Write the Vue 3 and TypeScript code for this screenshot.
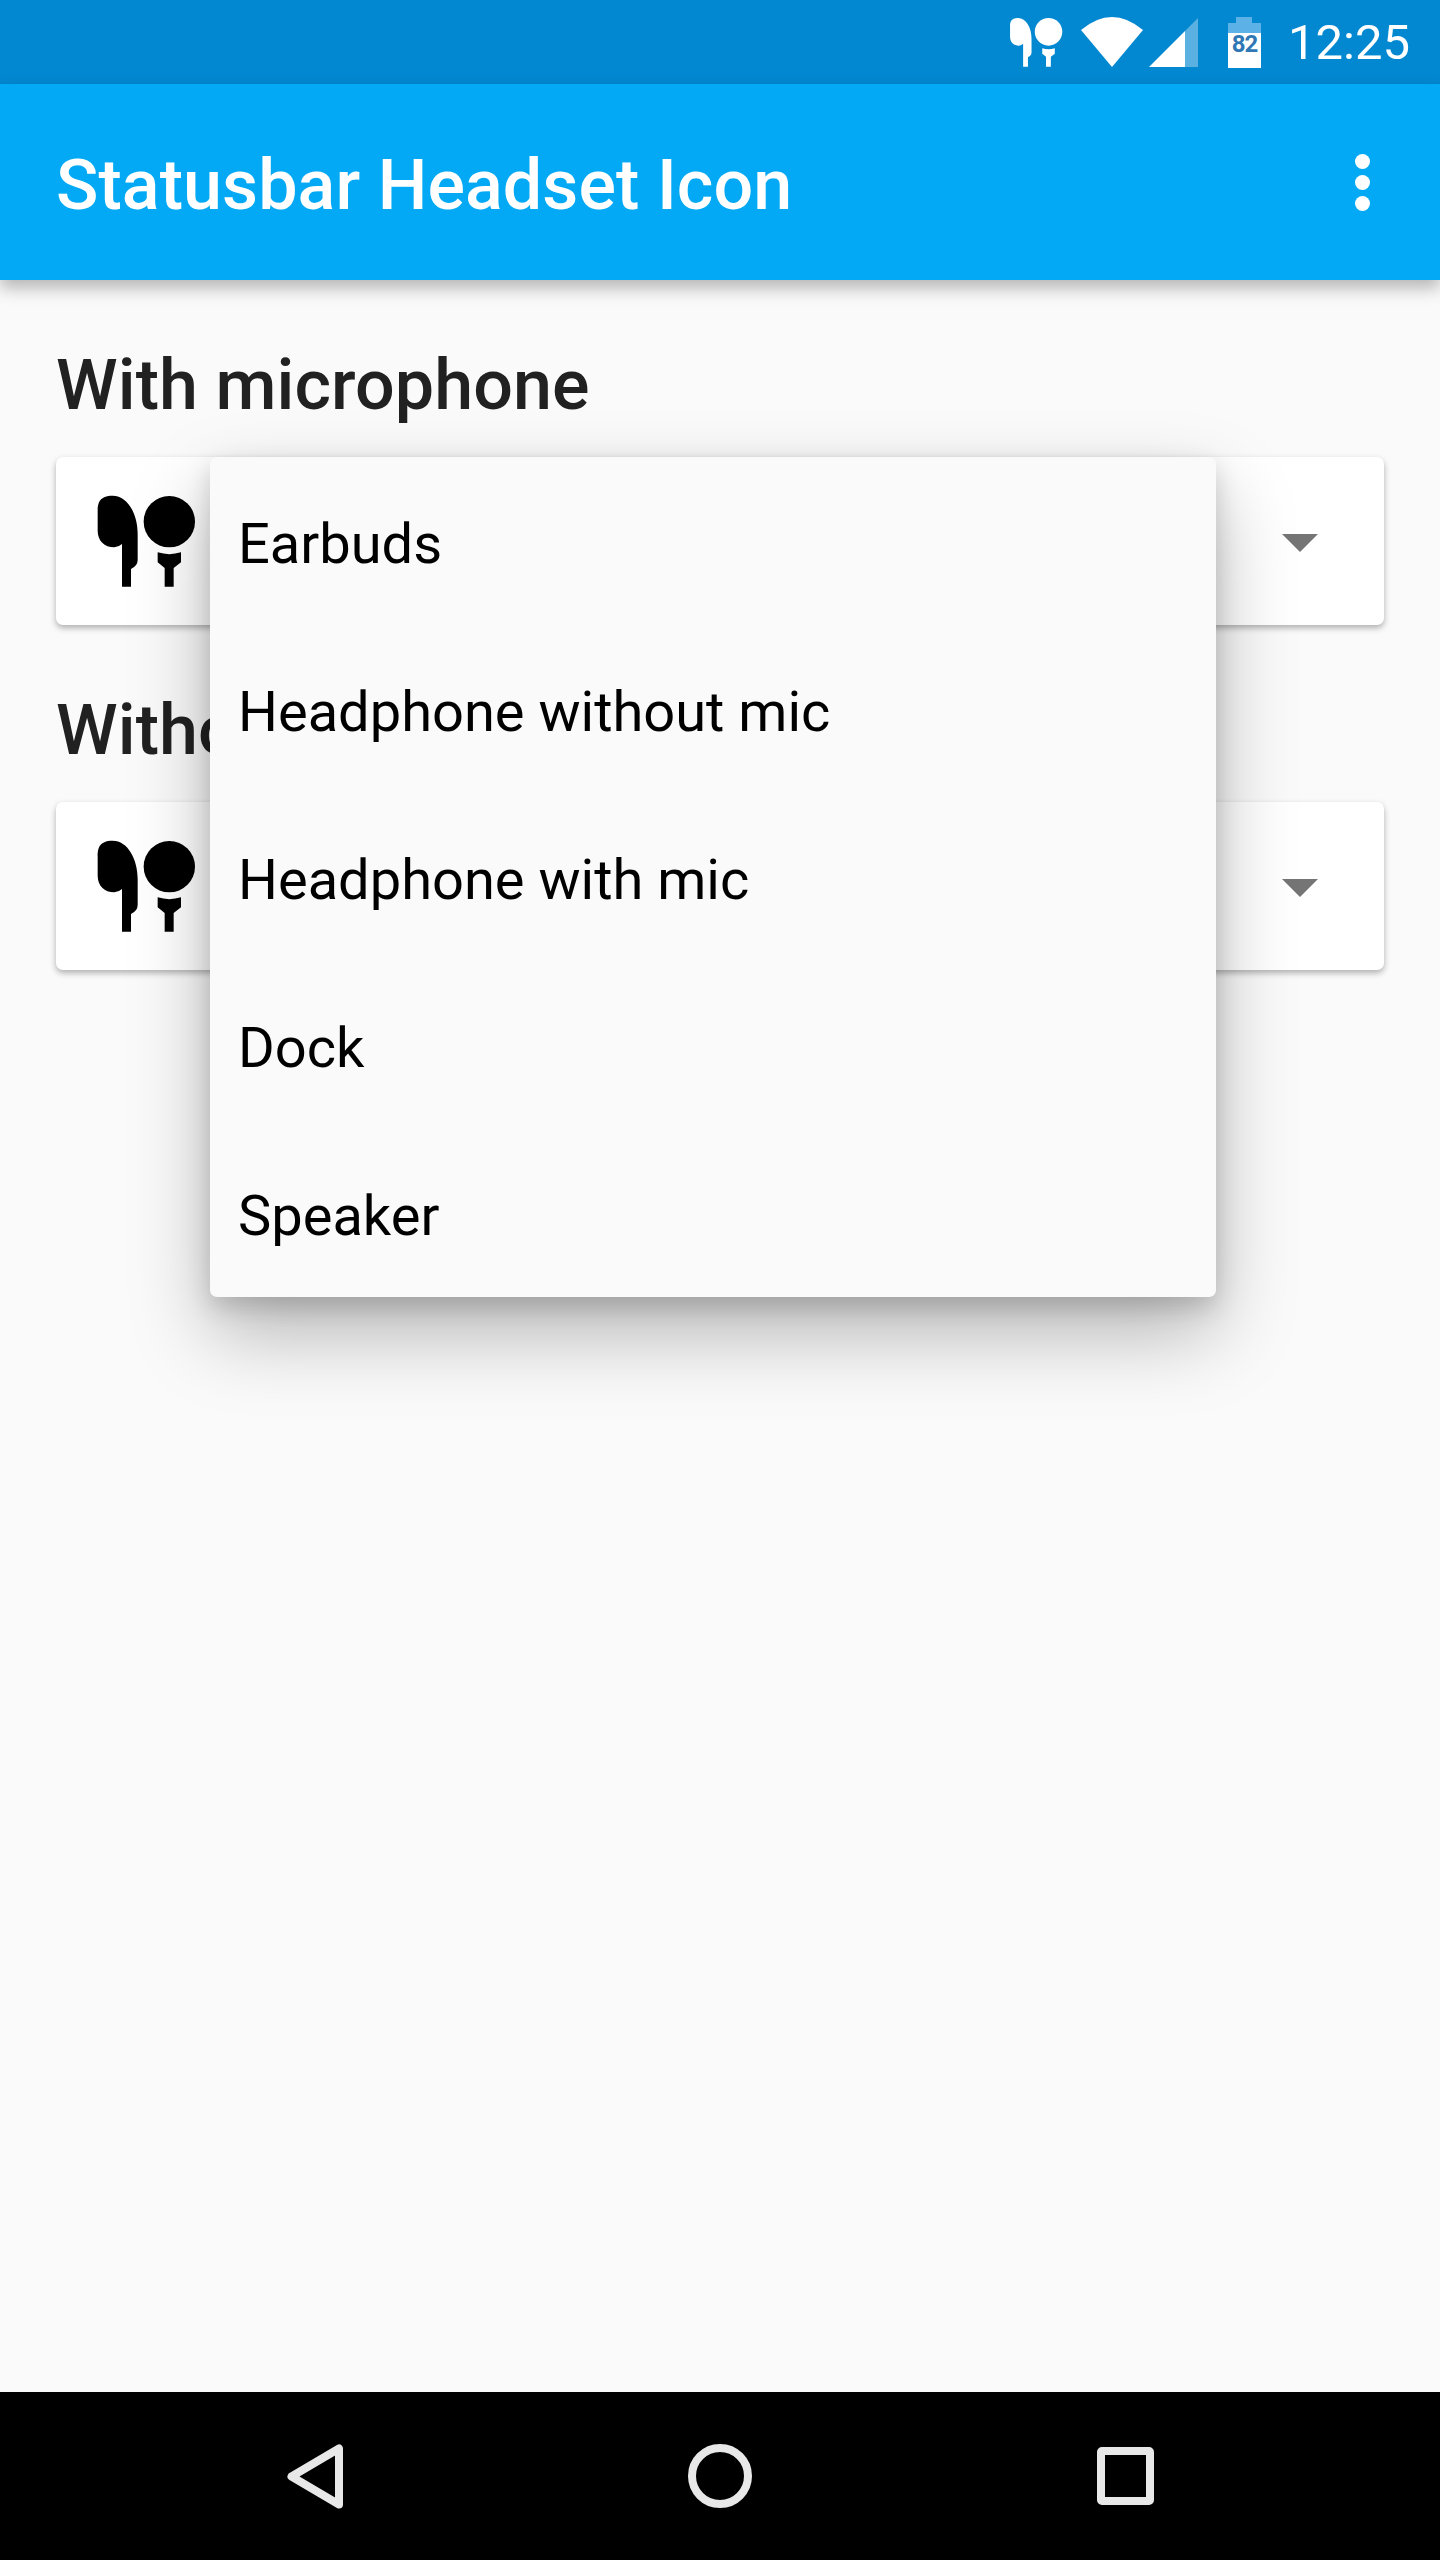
<script setup lang="ts">
const menuItems: string[] = ['Earbuds', 'Headphone without mic', 'Headphone with mic', 'Dock', 'Speaker'];
const sections: string[] = ['With microphone', 'Without microphone'];
</script>

<template>
  <div class="screen">
    <svg width="0" height="0" class="defs">
      <symbol id="earbuds" viewBox="170 160 300 285">
        <path d="M220 165C178 165 175 190 175 212V270C175 300 195 320 225 320Q240 318 248 310V438H275V385Q295 375 295 358V280C295 220 265 165 220 165Z" />
        <circle cx="390" cy="243" r="77" />
        <path d="M355 335Q390 346 425 335V365L403 382V438H376V382L355 365Z" />
      </symbol>
    </svg>

    <div class="status-bar">
      <svg class="status-buds"><use href="#earbuds" /></svg>
      <svg class="status-wifi" viewBox="0 0 62 50">
        <path d="M0 13Q31 -13 62 13L31 50Z" fill="#fff" />
      </svg>
      <svg class="status-signal" viewBox="0 0 49 49">
        <path d="M0 49L36 13V49Z" fill="#fff" />
        <path d="M36 13L49 0V49H36Z" fill="#fff" fill-opacity="0.35" />
      </svg>
      <div class="battery">
        <div class="battery-cap"></div>
        <div class="battery-body">82</div>
      </div>
      <span class="clock">12:25</span>
    </div>

    <header class="app-bar">
      <h1 class="title">Statusbar Headset Icon</h1>
      <div class="overflow">
        <span class="dot"></span>
        <span class="dot"></span>
        <span class="dot"></span>
      </div>
    </header>

    <main class="content">
      <section v-for="section in sections" :key="section" class="section">
        <h2 class="heading">{{ section }}</h2>
        <div class="spinner">
          <svg class="spinner-icon"><use href="#earbuds" /></svg>
          <span class="caret"></span>
        </div>
      </section>

      <ul class="menu">
        <li v-for="item in menuItems" :key="item" class="menu-item">{{ item }}</li>
      </ul>
    </main>

    <nav class="nav-bar">
      <svg class="nav-back" viewBox="0 0 56 65">
        <path d="M52 4.5V60.5L4.5 32.5Z" fill="none" stroke="#e8e8e8" stroke-width="8" stroke-linejoin="round" />
      </svg>
      <span class="nav-home"></span>
      <span class="nav-recent"></span>
    </nav>
  </div>
</template>

<style>
html,
body {
  margin: 0;
  background: #fafafa;
}
</style>

<style scoped>
.screen {
  width: 1440px;
  height: 2560px;
  display: flex;
  flex-direction: column;
  background: #fafafa;
  font-family: Roboto, "Liberation Sans", sans-serif;
  overflow: hidden;
}

.defs {
  position: absolute;
}

.status-bar {
  height: 84px;
  flex: none;
  display: flex;
  align-items: center;
  justify-content: flex-end;
  padding-right: 30px;
  box-sizing: border-box;
  background: #0288d1;
  color: #fff;
}

.status-buds {
  width: 54px;
  height: 51px;
  fill: #fff;
  margin-right: 18px;
}

.status-wifi {
  width: 62px;
  height: 50px;
  margin-right: 6px;
}

.status-signal {
  width: 49px;
  height: 49px;
  margin-right: 30px;
}

.battery {
  width: 33px;
  display: flex;
  flex-direction: column;
  align-items: center;
  margin-right: 27px;
}

.battery-cap {
  width: 16px;
  height: 6px;
  background: #5cb2e6;
}

.battery-body {
  width: 33px;
  height: 45px;
  box-sizing: border-box;
  padding-top: 9px;
  background: linear-gradient(#5cb2e6 10px, #fff 10px);
  color: #2f78b5;
  font-size: 24px;
  font-weight: 700;
  letter-spacing: -1px;
  line-height: 24px;
  text-align: center;
}

.clock {
  padding-top: 2px;
  font-size: 49px;
  line-height: 56px;
}

.app-bar {
  height: 196px;
  flex: none;
  position: relative;
  z-index: 1;
  display: flex;
  align-items: center;
  justify-content: space-between;
  padding: 0 70px 0 56px;
  background: #03a9f4;
  box-shadow: 0 8px 16px rgba(0, 0, 0, 0.28);
}

.title {
  margin: 0;
  padding-top: 6px;
  color: #fff;
  font-size: 70px;
  font-weight: 500;
  letter-spacing: 0.08px;
  line-height: 84px;
}

.overflow {
  display: flex;
  flex-direction: column;
  gap: 6px;
}

.dot {
  width: 15px;
  height: 15px;
  border-radius: 50%;
  background: #fff;
}

.content {
  flex: 1;
  position: relative;
  padding: 0 56px;
}

.section {
  display: flex;
  flex-direction: column;
}

.heading {
  margin: 0;
  padding-top: 63px;
  height: 114px;
  color: #212121;
  font-size: 70px;
  font-weight: 500;
  letter-spacing: 0.08px;
  line-height: 84px;
}

.spinner {
  height: 168px;
  display: flex;
  align-items: center;
  justify-content: space-between;
  padding: 0 66px 0 40px;
  border-radius: 7px;
  background: #fff;
  box-shadow: 0 3px 6px rgba(0, 0, 0, 0.3);
}

.spinner-icon {
  width: 100px;
  height: 95px;
  fill: #000;
}

.caret {
  width: 0;
  height: 0;
  margin-top: 3px;
  border-left: 18px solid transparent;
  border-right: 18px solid transparent;
  border-top: 18px solid #757575;
}

.menu {
  position: absolute;
  top: 177px;
  left: 210px;
  width: 1006px;
  margin: 0;
  padding: 0;
  list-style: none;
  border-radius: 7px;
  background: #fafafa;
  box-shadow: 0 36px 80px rgba(0, 0, 0, 0.28), 0 10px 24px rgba(0, 0, 0, 0.16);
}

.menu-item {
  height: 168px;
  box-sizing: border-box;
  display: flex;
  align-items: center;
  padding: 6px 28px 0;
  color: #000;
  font-size: 56px;
}

.nav-bar {
  height: 168px;
  flex: none;
  box-sizing: border-box;
  display: flex;
  align-items: center;
  justify-content: space-between;
  padding: 0 286px 0 287px;
  background: #000;
}

.nav-back {
  width: 56px;
  height: 65px;
}

.nav-home {
  width: 48px;
  height: 48px;
  border: 8px solid #e8e8e8;
  border-radius: 50%;
}

.nav-recent {
  width: 41px;
  height: 42px;
  border: 8px solid #e8e8e8;
  border-radius: 5px;
}
</style>
